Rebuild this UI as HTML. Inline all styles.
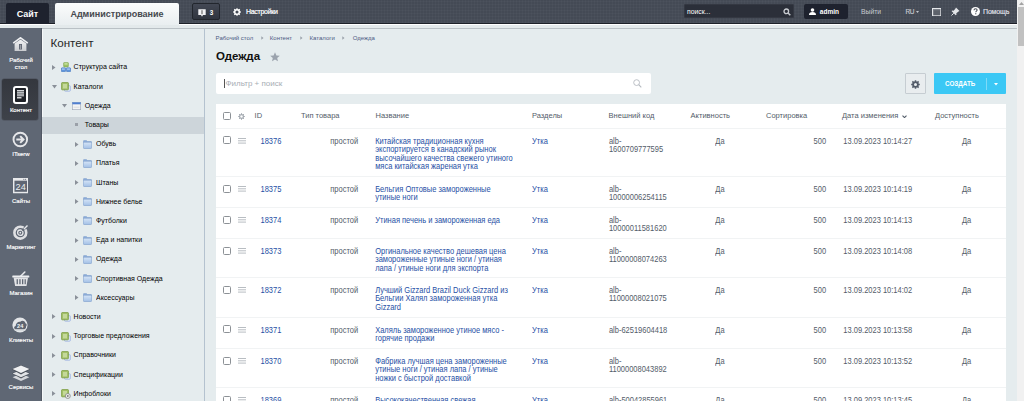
<!DOCTYPE html>
<html><head><meta charset="utf-8">
<style>
*{box-sizing:border-box;margin:0;padding:0}
html,body{width:1024px;height:401px;overflow:hidden;background:#e5ecee;font-family:"Liberation Sans",sans-serif;position:relative}
.a{position:absolute;white-space:nowrap}
#top{left:0;top:0;width:1017px;height:24px;background:repeating-linear-gradient(0deg,rgba(255,255,255,0.025) 0 1px,transparent 1px 3px),repeating-linear-gradient(90deg,rgba(255,255,255,0.025) 0 1px,transparent 1px 3px),#444a55;border-bottom:1px solid #1c2028}
#strip{left:0;top:24px;width:1017px;height:5px;background:#e3e9eb;border-top:1px solid #fff;border-bottom:1px solid #b9c0c5}
#side{left:0;top:28px;width:42px;height:373px;background:#5f6774;border-right:1px solid #515864}
#tree{left:42px;top:29px;width:163px;height:372px;background:#e5ecee;border-right:1px solid #b4c2cf;border-left:1px solid #f6f8f9}
#main{left:205px;top:29px;width:812px;height:372px;background:#e5ecee}
#sb{left:1017px;top:0;width:7px;height:401px;background:#f1f1f1}
#sbthumb{left:1018px;top:7px;width:6px;height:39px;background:#c1c1c1}
.tab1{left:6px;top:3px;width:43px;height:21px;background:#1e222e;border-radius:2px 2px 0 0;color:#fff;font-weight:bold;font-size:9px;text-align:center;line-height:22.5px}
.tab2{left:55px;top:3px;width:124px;height:22px;background:linear-gradient(#fbfcfc,#e9eef0);border-radius:2px 2px 0 0;color:#46494e;font-weight:bold;font-size:9px;text-align:center;line-height:22.5px}
.sl{-webkit-text-stroke:0.15px #fff;color:#fff;font-size:6px;text-align:center;width:42px;left:0;line-height:8px}
.ti{font-size:7px;color:#000;line-height:10px;transform:scaleY(1.1);transform-origin:0 50%}
.bc{font-size:6px;color:#4c5a83;line-height:8px;top:34px}
.th{font-size:7.5px;color:#535c69;line-height:9px;top:110.7px}
.td{font-size:7.5px;color:#535c69;line-height:7.39px;transform:scaleY(1.15);transform-origin:0 0}
.lk{color:#1f50a5}
.cb{width:8px;height:8px;border:1px solid #8c9196;border-radius:1.5px;left:223px;background:#fff}
.dr{left:238px;width:8px;height:5px;border-top:1px solid #b5b9be;border-bottom:1px solid #b5b9be}
.dr:after{content:"";position:absolute;left:0;right:0;top:1.5px;height:1px;background:#b5b9be}
.sep{left:216px;width:790px;height:1px;background:#f1f3f4}
</style></head>
<body>
<div id="top" class="a"></div>
<div id="strip" class="a"></div>

<div class="a tab1">Сайт</div>
<div class="a tab2">Администрирование</div>
<div class="a" style="left:191.5px;top:3.2px;width:28px;height:17.3px;background:linear-gradient(#434854,#30353f);border:1px solid #22262d;border-radius:2px"></div>
<svg class="a" style="left:197.5px;top:8.5px" width="8" height="8" viewBox="0 0 8 8"><path d="M0.3 0.3h7.4v5.8h-2.7l-1 1.6-1-1.6H0.3z" fill="#f2f3f5"/><rect x="3.5" y="1.2" width="1" height="4" fill="#555"/></svg>
<div class="a" style="left:209.8px;top:7.5px;font-size:6.3px;font-weight:bold;color:#fff;line-height:9px">3</div>
<svg class="a" style="left:232.5px;top:7.8px" width="8" height="8" viewBox="0 0 8 8"><circle cx="4" cy="4" r="2.3" fill="none" stroke="#fff" stroke-width="1.5"/><g stroke="#fff" stroke-width="1.3"><path d="M4 0.2v1.5M4 6.3v1.5M0.2 4h1.5M6.3 4h1.5M1.3 1.3l1 1M5.7 5.7l1 1M1.3 6.7l1-1M5.7 2.3l1-1"/></g></svg>
<div class="a" style="left:246px;top:7px;font-size:7px;letter-spacing:-0.3px;-webkit-text-stroke:0.2px #fff;color:#fff;line-height:9px">Настройки</div>
<div class="a" style="left:684px;top:4.2px;width:110px;height:14.3px;background:#2b2f39;border:1px solid #343842;border-radius:1px"></div>
<div class="a" style="left:687px;top:7px;font-size:6.8px;color:#fff;line-height:9px">поиск...</div>
<svg class="a" style="left:783px;top:7.5px" width="8" height="8" viewBox="0 0 8 8"><circle cx="3.3" cy="3.3" r="2.3" fill="none" stroke="#c9ccd1" stroke-width="1.3"/><path d="M5 5l2.3 2.3" stroke="#c9ccd1" stroke-width="1.5"/></svg>
<div class="a" style="left:804px;top:4px;width:44px;height:15px;background:#1e222e;border-radius:2px"></div>
<svg class="a" style="left:809px;top:8px" width="7" height="7" viewBox="0 0 7 7"><circle cx="3.5" cy="2" r="1.8" fill="#fff"/><path d="M0 7c0-2.2 1.3-3 3.5-3s3.5 0.8 3.5 3z" fill="#fff"/></svg>
<div class="a" style="left:819.8px;top:7px;font-size:6.5px;font-weight:bold;color:#fff;line-height:9px">admin</div>
<div class="a" style="left:861px;top:7px;font-size:6.8px;color:#c6cad0;line-height:9px">Выйти</div>
<div class="a" style="left:905.4px;top:7.3px;font-size:6.5px;letter-spacing:-0.3px;-webkit-text-stroke:0.15px #c6cad0;color:#c6cad0;line-height:9px">RU</div>
<svg class="a" style="left:916px;top:10.5px" width="3" height="2" viewBox="0 0 3 2"><path d="M0 0h3l-1.5 2z" fill="#c3c7cd"/></svg>
<svg class="a" style="left:931.7px;top:7.5px" width="9.5" height="8.5" viewBox="0 0 9.5 8.5"><rect x="0.6" y="0.6" width="8.3" height="7.3" fill="#5d626b" stroke="#e4e6e9" stroke-width="1.2"/><rect x="1.2" y="1.2" width="7.1" height="1" fill="#7d828a"/></svg>
<svg class="a" style="left:951px;top:7px" width="9" height="9" viewBox="0 0 9 9"><path d="M5 0.5l3.5 3.5-1 0.5-2.2 1.8 0.2 1.5-0.8 0.5-4-4 0.5-0.8 1.5 0.2 1.8-2.2z" fill="#e3e5e8"/><path d="M2.8 6.2l-2.3 2.3" stroke="#e3e5e8" stroke-width="1"/></svg>
<svg class="a" style="left:971px;top:7px" width="9" height="9" viewBox="0 0 9 9"><circle cx="4.5" cy="4.5" r="4.5" fill="#fff"/><path d="M3 3.3c0-1 0.7-1.6 1.6-1.6s1.5 0.6 1.5 1.4c0 1.1-1.3 1.1-1.3 2.2" fill="none" stroke="#4a4f59" stroke-width="1.1"/><rect x="4.2" y="6.2" width="1.1" height="1.1" fill="#4a4f59"/></svg>
<div class="a" style="left:983px;top:7px;font-size:7px;letter-spacing:-0.15px;-webkit-text-stroke:0.2px #dcdee2;color:#dcdee2;line-height:9px">Помощь</div>
<div id="side" class="a"></div>

<!-- sidebar -->
<svg class="a" style="left:12px;top:37px" width="17" height="15" viewBox="0 0 17 15"><defs><linearGradient id="hg" x1="0" y1="0" x2="0" y2="1"><stop offset="0" stop-color="#f4f5f6"/><stop offset="1" stop-color="#c9cbcf"/></linearGradient></defs><path d="M1.2 6.2L8.5 0.8l7.3 5.4" fill="none" stroke="#eeeff1" stroke-width="1.6"/><path d="M2.6 6.6L8.5 2.4l5.9 4.2V14H2.6z" fill="url(#hg)"/><rect x="7" y="7" width="3" height="5.5" fill="#5f6673"/><rect x="7.9" y="7.8" width="1.2" height="4.7" fill="#9a9ea5"/></svg>
<div class="a sl" style="top:56px">Рабочий</div>
<div class="a sl" style="top:63px">стол</div>
<div class="a" style="left:1.5px;top:78.5px;width:36.3px;height:41px;background:linear-gradient(#34373e,#3e424a);border-radius:2px;box-shadow:0 0 0 0.5px #4a4f58"></div>
<svg class="a" style="left:12.5px;top:85.5px" width="15" height="18" viewBox="0 0 15 18"><rect x="1" y="1" width="13" height="16" rx="2" fill="#1e2127" stroke="#fff" stroke-width="2"/><rect x="4" y="4" width="7" height="1.3" fill="#d6d8db"/><rect x="4" y="5.7" width="7" height="1.3" fill="#b9bcc0"/><rect x="4" y="7.4" width="7" height="1.3" fill="#d6d8db"/><rect x="4" y="9.1" width="7" height="1.3" fill="#b9bcc0"/><rect x="4" y="11.2" width="4.5" height="1.2" fill="#fff"/></svg>
<div class="a sl" style="top:106px">Контент</div>
<svg class="a" style="left:12px;top:130.5px" width="17" height="17" viewBox="0 0 17 17"><circle cx="8.3" cy="8.5" r="6.8" fill="none" stroke="#e6e7ea" stroke-width="1.9"/><path d="M4.3 8.5h7M8.2 5.1l3.3 3.4-3.3 3.4" fill="none" stroke="#e6e7ea" stroke-width="2"/></svg>
<div class="a sl" style="top:149.5px">ITserw</div>
<svg class="a" style="left:13px;top:177.5px" width="15" height="16" viewBox="0 0.5 15.5 16"><rect x="0" y="0" width="16" height="16" fill="#e9eaec"/><rect x="1.5" y="3" width="13" height="11.5" fill="#5f6673"/><circle cx="11.2" cy="1.5" r="0.6" fill="#5f6673"/><circle cx="13" cy="1.5" r="0.6" fill="#5f6673"/><text x="8" y="12.6" font-family="Liberation Sans" font-size="9.5" fill="#eceef0" text-anchor="middle">24</text></svg>
<div class="a sl" style="top:196.5px">Сайты</div>
<svg class="a" style="left:12.5px;top:224px" width="16" height="16" viewBox="0 0 16 16"><circle cx="7.3" cy="8.7" r="5.9" fill="none" stroke="#dfe0e3" stroke-width="2.6"/><circle cx="7.3" cy="8.7" r="2.7" fill="none" stroke="#e6e7ea" stroke-width="1.3"/><circle cx="7.3" cy="8.7" r="0.9" fill="#e6e7ea"/><path d="M9.3 6.7L14.2 1.8" stroke="#5f6774" stroke-width="2.6"/><path d="M10.8 5.2L14.5 1.5" stroke="#e6e7ea" stroke-width="1.4"/></svg>
<div class="a sl" style="top:243px">Маркетинг</div>
<svg class="a" style="left:11.5px;top:270.5px" width="18" height="16" viewBox="0 0 18 16"><path d="M8.8 5L12.8 1" stroke="#e6e7ea" stroke-width="1.6" stroke-linecap="round"/><rect x="0.3" y="4.4" width="17" height="2.2" rx="0.6" fill="#eeeff1"/><path d="M1.6 6.6h14.4l-1.5 8.4H3.1z" fill="#e2e3e6"/><g fill="#5f6774"><rect x="4.6" y="8.2" width="1.3" height="5"/><rect x="7.3" y="8.2" width="1.3" height="5"/><rect x="10" y="8.2" width="1.3" height="5"/><rect x="12.6" y="8.2" width="1.2" height="5"/></g></svg>
<div class="a sl" style="top:289px">Магазин</div>
<svg class="a" style="left:12px;top:317px" width="16" height="16" viewBox="0 0 16 16"><circle cx="8" cy="8" r="7.6" fill="#e3e5e8"/><path d="M3.6 12.2c-1.6 0-2.2-2.9 0.1-3.3 0-2.8 2.3-4.6 4.6-4.2 1.5-1.8 5-1.2 5.1 1.6 1.7 0.4 1.6 2.7 0.6 3.3 0.3 1.5-0.6 2.6-2 2.6z" fill="#5d6470"/><text x="8.2" y="10.6" font-family="Liberation Sans" font-size="5.6" font-weight="bold" fill="#f4f5f6" text-anchor="middle">24</text><path d="M2.5 13.2h11" stroke="#c9ccd1" stroke-width="0.6"/></svg>
<div class="a sl" style="top:336px">Клиенты</div>
<svg class="a" style="left:12.3px;top:365.3px" width="18" height="17" viewBox="0 0 18 17"><path d="M9 8.6L0.6 12.2 9 16l8.4-3.8z" fill="#d5d7db"/><path d="M9 4L-0.2 8.4 9 13.6l9.2-5.2z" fill="#4c525b"/><path d="M9 5L0.6 8.4 9 12.2l8.4-3.8z" fill="#e2e4e7"/><path d="M9 0L-0.2 4.3 9 9.4l9.2-5.1z" fill="#4c525b"/><path d="M9 0.4L0.6 4.1 9 8l8.4-3.9z" fill="#f0f1f3"/></svg>
<div class="a sl" style="top:383px">Сервисы</div>
<div id="tree" class="a"></div>
<div class="a" style="left:42px;top:117px;width:162px;height:16.5px;background:#cdd5da"></div>
<svg class="a" style="left:52px;top:64.8px" width="4" height="5" viewBox="0 0 4 5"><path d="M0 0l3.5 2.5L0 5z" fill="#8a9099"/></svg>
<svg class="a" style="left:60.5px;top:62.3px" width="10" height="10" viewBox="0 0 10 10"><rect x="2.6" y="0.4" width="4.8" height="4.6" rx="0.8" fill="#9cc266" stroke="#79a046" stroke-width="0.5"/><rect x="3.4" y="1.1" width="3.2" height="1.6" fill="#c6e09c"/><rect x="0.3" y="5.8" width="4.3" height="3.9" rx="0.8" fill="#5e95dc" stroke="#3f70b8" stroke-width="0.5"/><rect x="5.4" y="5.8" width="4.3" height="3.9" rx="0.8" fill="#5e95dc" stroke="#3f70b8" stroke-width="0.5"/><rect x="1" y="6.4" width="2.8" height="1.4" fill="#a9c9f2"/><rect x="6.1" y="6.4" width="2.8" height="1.4" fill="#a9c9f2"/></svg>
<div class="a ti" style="left:73.6px;top:62.3px">Структура сайта</div>
<svg class="a" style="left:51.5px;top:84.5px" width="5" height="4" viewBox="0 0 5 4"><path d="M0 0h5L2.5 3.5z" fill="#8a9099"/></svg>
<svg class="a" style="left:60.5px;top:82.0px" width="10" height="10" viewBox="0 0 10 10"><rect x="3.5" y="3.7" width="5.8" height="5.5" rx="0.8" fill="#e3ebfa" stroke="#8fa6dc" stroke-width="0.7"/><rect x="0.6" y="0.6" width="6.8" height="7.2" rx="0.6" fill="#a6c26a" stroke="#789a3f" stroke-width="0.8"/><rect x="2" y="2" width="4" height="4.4" fill="#c4d89a"/></svg>
<div class="a ti" style="left:73.6px;top:81.5px">Каталоги</div>
<svg class="a" style="left:62.3px;top:103.7px" width="5" height="4" viewBox="0 0 5 4"><path d="M0 0h5L2.5 3.5z" fill="#8a9099"/></svg>
<svg class="a" style="left:72px;top:101.7px" width="9" height="8" viewBox="0 0 9 8"><rect x="0.3" y="0.3" width="8.4" height="7.4" fill="#f4f4f4" stroke="#9aa4b4" stroke-width="0.6"/><rect x="0.3" y="0.3" width="8.4" height="2" fill="#4f7fd0"/><path d="M1.5 5.2h6" stroke="#c8ccd2" stroke-width="0.6"/></svg>
<div class="a ti" style="left:84.8px;top:100.7px">Одежда</div>
<div class="a" style="left:74.5px;top:123.4px;width:3px;height:3px;background:#9aa0a8"></div>
<div class="a ti" style="left:84.8px;top:119.9px">Товары</div>
<svg class="a" style="left:74.5px;top:141.6px" width="4" height="5" viewBox="0 0 4 5"><path d="M0 0l3.5 2.5L0 5z" fill="#8a9099"/></svg>
<svg class="a" style="left:83px;top:139.6px" width="9" height="9" viewBox="0 0 9 9"><defs><linearGradient id="fg" x1="0" y1="0" x2="0" y2="1"><stop offset="0" stop-color="#d6e5f7"/><stop offset="1" stop-color="#a3c0e6"/></linearGradient></defs><path d="M0.9 0.6h2.6l0.9 0.9h3.7q0.5 0 0.5 0.5v0.6H0.4V1.1q0-0.5 0.5-0.5z" fill="#8fb0dd" stroke="#7c9dcb" stroke-width="0.5"/><rect x="0.35" y="2.2" width="8.3" height="6.3" rx="0.8" fill="url(#fg)" stroke="#7c9dcb" stroke-width="0.6"/></svg>
<div class="a ti" style="left:96px;top:139.1px">Обувь</div>
<svg class="a" style="left:74.5px;top:160.8px" width="4" height="5" viewBox="0 0 4 5"><path d="M0 0l3.5 2.5L0 5z" fill="#8a9099"/></svg>
<svg class="a" style="left:83px;top:158.8px" width="9" height="9" viewBox="0 0 9 9"><defs><linearGradient id="fg" x1="0" y1="0" x2="0" y2="1"><stop offset="0" stop-color="#d6e5f7"/><stop offset="1" stop-color="#a3c0e6"/></linearGradient></defs><path d="M0.9 0.6h2.6l0.9 0.9h3.7q0.5 0 0.5 0.5v0.6H0.4V1.1q0-0.5 0.5-0.5z" fill="#8fb0dd" stroke="#7c9dcb" stroke-width="0.5"/><rect x="0.35" y="2.2" width="8.3" height="6.3" rx="0.8" fill="url(#fg)" stroke="#7c9dcb" stroke-width="0.6"/></svg>
<div class="a ti" style="left:96px;top:158.3px">Платья</div>
<svg class="a" style="left:74.5px;top:180.0px" width="4" height="5" viewBox="0 0 4 5"><path d="M0 0l3.5 2.5L0 5z" fill="#8a9099"/></svg>
<svg class="a" style="left:83px;top:178.0px" width="9" height="9" viewBox="0 0 9 9"><defs><linearGradient id="fg" x1="0" y1="0" x2="0" y2="1"><stop offset="0" stop-color="#d6e5f7"/><stop offset="1" stop-color="#a3c0e6"/></linearGradient></defs><path d="M0.9 0.6h2.6l0.9 0.9h3.7q0.5 0 0.5 0.5v0.6H0.4V1.1q0-0.5 0.5-0.5z" fill="#8fb0dd" stroke="#7c9dcb" stroke-width="0.5"/><rect x="0.35" y="2.2" width="8.3" height="6.3" rx="0.8" fill="url(#fg)" stroke="#7c9dcb" stroke-width="0.6"/></svg>
<div class="a ti" style="left:96px;top:177.5px">Штаны</div>
<svg class="a" style="left:74.5px;top:199.2px" width="4" height="5" viewBox="0 0 4 5"><path d="M0 0l3.5 2.5L0 5z" fill="#8a9099"/></svg>
<svg class="a" style="left:83px;top:197.2px" width="9" height="9" viewBox="0 0 9 9"><defs><linearGradient id="fg" x1="0" y1="0" x2="0" y2="1"><stop offset="0" stop-color="#d6e5f7"/><stop offset="1" stop-color="#a3c0e6"/></linearGradient></defs><path d="M0.9 0.6h2.6l0.9 0.9h3.7q0.5 0 0.5 0.5v0.6H0.4V1.1q0-0.5 0.5-0.5z" fill="#8fb0dd" stroke="#7c9dcb" stroke-width="0.5"/><rect x="0.35" y="2.2" width="8.3" height="6.3" rx="0.8" fill="url(#fg)" stroke="#7c9dcb" stroke-width="0.6"/></svg>
<div class="a ti" style="left:96px;top:196.7px">Нижнее белье</div>
<svg class="a" style="left:74.5px;top:218.4px" width="4" height="5" viewBox="0 0 4 5"><path d="M0 0l3.5 2.5L0 5z" fill="#8a9099"/></svg>
<svg class="a" style="left:83px;top:216.4px" width="9" height="9" viewBox="0 0 9 9"><defs><linearGradient id="fg" x1="0" y1="0" x2="0" y2="1"><stop offset="0" stop-color="#d6e5f7"/><stop offset="1" stop-color="#a3c0e6"/></linearGradient></defs><path d="M0.9 0.6h2.6l0.9 0.9h3.7q0.5 0 0.5 0.5v0.6H0.4V1.1q0-0.5 0.5-0.5z" fill="#8fb0dd" stroke="#7c9dcb" stroke-width="0.5"/><rect x="0.35" y="2.2" width="8.3" height="6.3" rx="0.8" fill="url(#fg)" stroke="#7c9dcb" stroke-width="0.6"/></svg>
<div class="a ti" style="left:96px;top:215.9px">Футболки</div>
<svg class="a" style="left:74.5px;top:237.6px" width="4" height="5" viewBox="0 0 4 5"><path d="M0 0l3.5 2.5L0 5z" fill="#8a9099"/></svg>
<svg class="a" style="left:83px;top:235.6px" width="9" height="9" viewBox="0 0 9 9"><defs><linearGradient id="fg" x1="0" y1="0" x2="0" y2="1"><stop offset="0" stop-color="#d6e5f7"/><stop offset="1" stop-color="#a3c0e6"/></linearGradient></defs><path d="M0.9 0.6h2.6l0.9 0.9h3.7q0.5 0 0.5 0.5v0.6H0.4V1.1q0-0.5 0.5-0.5z" fill="#8fb0dd" stroke="#7c9dcb" stroke-width="0.5"/><rect x="0.35" y="2.2" width="8.3" height="6.3" rx="0.8" fill="url(#fg)" stroke="#7c9dcb" stroke-width="0.6"/></svg>
<div class="a ti" style="left:96px;top:235.1px">Еда и напитки</div>
<svg class="a" style="left:74.5px;top:256.8px" width="4" height="5" viewBox="0 0 4 5"><path d="M0 0l3.5 2.5L0 5z" fill="#8a9099"/></svg>
<svg class="a" style="left:83px;top:254.8px" width="9" height="9" viewBox="0 0 9 9"><defs><linearGradient id="fg" x1="0" y1="0" x2="0" y2="1"><stop offset="0" stop-color="#d6e5f7"/><stop offset="1" stop-color="#a3c0e6"/></linearGradient></defs><path d="M0.9 0.6h2.6l0.9 0.9h3.7q0.5 0 0.5 0.5v0.6H0.4V1.1q0-0.5 0.5-0.5z" fill="#8fb0dd" stroke="#7c9dcb" stroke-width="0.5"/><rect x="0.35" y="2.2" width="8.3" height="6.3" rx="0.8" fill="url(#fg)" stroke="#7c9dcb" stroke-width="0.6"/></svg>
<div class="a ti" style="left:96px;top:254.3px">Одежда</div>
<svg class="a" style="left:74.5px;top:276.0px" width="4" height="5" viewBox="0 0 4 5"><path d="M0 0l3.5 2.5L0 5z" fill="#8a9099"/></svg>
<svg class="a" style="left:83px;top:274.0px" width="9" height="9" viewBox="0 0 9 9"><defs><linearGradient id="fg" x1="0" y1="0" x2="0" y2="1"><stop offset="0" stop-color="#d6e5f7"/><stop offset="1" stop-color="#a3c0e6"/></linearGradient></defs><path d="M0.9 0.6h2.6l0.9 0.9h3.7q0.5 0 0.5 0.5v0.6H0.4V1.1q0-0.5 0.5-0.5z" fill="#8fb0dd" stroke="#7c9dcb" stroke-width="0.5"/><rect x="0.35" y="2.2" width="8.3" height="6.3" rx="0.8" fill="url(#fg)" stroke="#7c9dcb" stroke-width="0.6"/></svg>
<div class="a ti" style="left:96px;top:273.5px">Спортивная Одежда</div>
<svg class="a" style="left:74.5px;top:295.2px" width="4" height="5" viewBox="0 0 4 5"><path d="M0 0l3.5 2.5L0 5z" fill="#8a9099"/></svg>
<svg class="a" style="left:83px;top:293.2px" width="9" height="9" viewBox="0 0 9 9"><defs><linearGradient id="fg" x1="0" y1="0" x2="0" y2="1"><stop offset="0" stop-color="#d6e5f7"/><stop offset="1" stop-color="#a3c0e6"/></linearGradient></defs><path d="M0.9 0.6h2.6l0.9 0.9h3.7q0.5 0 0.5 0.5v0.6H0.4V1.1q0-0.5 0.5-0.5z" fill="#8fb0dd" stroke="#7c9dcb" stroke-width="0.5"/><rect x="0.35" y="2.2" width="8.3" height="6.3" rx="0.8" fill="url(#fg)" stroke="#7c9dcb" stroke-width="0.6"/></svg>
<div class="a ti" style="left:96px;top:292.7px">Аксессуары</div>
<svg class="a" style="left:52px;top:314.4px" width="4" height="5" viewBox="0 0 4 5"><path d="M0 0l3.5 2.5L0 5z" fill="#8a9099"/></svg>
<svg class="a" style="left:60.5px;top:312.4px" width="10" height="10" viewBox="0 0 10 10"><rect x="3.5" y="3.7" width="5.8" height="5.5" rx="0.8" fill="#e3ebfa" stroke="#8fa6dc" stroke-width="0.7"/><rect x="0.6" y="0.6" width="6.8" height="7.2" rx="0.6" fill="#a6c26a" stroke="#789a3f" stroke-width="0.8"/><rect x="2" y="2" width="4" height="4.4" fill="#c4d89a"/></svg>
<div class="a ti" style="left:73.6px;top:311.9px">Новости</div>
<svg class="a" style="left:52px;top:333.6px" width="4" height="5" viewBox="0 0 4 5"><path d="M0 0l3.5 2.5L0 5z" fill="#8a9099"/></svg>
<svg class="a" style="left:60.5px;top:331.6px" width="10" height="10" viewBox="0 0 10 10"><rect x="3.5" y="3.7" width="5.8" height="5.5" rx="0.8" fill="#e3ebfa" stroke="#8fa6dc" stroke-width="0.7"/><rect x="0.6" y="0.6" width="6.8" height="7.2" rx="0.6" fill="#a6c26a" stroke="#789a3f" stroke-width="0.8"/><rect x="2" y="2" width="4" height="4.4" fill="#c4d89a"/></svg>
<div class="a ti" style="left:73.6px;top:331.1px">Торговые предложения</div>
<svg class="a" style="left:52px;top:352.8px" width="4" height="5" viewBox="0 0 4 5"><path d="M0 0l3.5 2.5L0 5z" fill="#8a9099"/></svg>
<svg class="a" style="left:60.5px;top:350.8px" width="10" height="10" viewBox="0 0 10 10"><rect x="3.5" y="3.7" width="5.8" height="5.5" rx="0.8" fill="#e3ebfa" stroke="#8fa6dc" stroke-width="0.7"/><rect x="0.6" y="0.6" width="6.8" height="7.2" rx="0.6" fill="#a6c26a" stroke="#789a3f" stroke-width="0.8"/><rect x="2" y="2" width="4" height="4.4" fill="#c4d89a"/></svg>
<div class="a ti" style="left:73.6px;top:350.3px">Справочники</div>
<svg class="a" style="left:52px;top:372.0px" width="4" height="5" viewBox="0 0 4 5"><path d="M0 0l3.5 2.5L0 5z" fill="#8a9099"/></svg>
<svg class="a" style="left:60.5px;top:370.0px" width="10" height="10" viewBox="0 0 10 10"><rect x="3.5" y="3.7" width="5.8" height="5.5" rx="0.8" fill="#e3ebfa" stroke="#8fa6dc" stroke-width="0.7"/><rect x="0.6" y="0.6" width="6.8" height="7.2" rx="0.6" fill="#a6c26a" stroke="#789a3f" stroke-width="0.8"/><rect x="2" y="2" width="4" height="4.4" fill="#c4d89a"/></svg>
<div class="a ti" style="left:73.6px;top:369.5px">Спецификации</div>
<svg class="a" style="left:52px;top:391.2px" width="4" height="5" viewBox="0 0 4 5"><path d="M0 0l3.5 2.5L0 5z" fill="#8a9099"/></svg>
<svg class="a" style="left:60.5px;top:389.2px" width="10" height="10" viewBox="0 0 10 10"><rect x="0.6" y="0.6" width="6.8" height="7.2" rx="0.6" fill="#a6c26a" stroke="#789a3f" stroke-width="0.8"/><rect x="2" y="2" width="4" height="4.4" fill="#c4d89a"/><circle cx="6.8" cy="7" r="2.5" fill="#ececec" stroke="#7a7a7a" stroke-width="0.7"/><circle cx="6.8" cy="7" r="0.9" fill="#7a7a7a"/></svg>
<div class="a ti" style="left:73.6px;top:388.7px">Инфоблоки</div>
<div class="a" style="left:50.5px;top:36px;font-size:11.6px;color:#262626;line-height:14px">Контент</div>
<div id="main" class="a"></div>
<div id="sb" class="a"></div>
<div id="sbthumb" class="a"></div>
<svg class="a" style="left:1018.5px;top:2px" width="5" height="3" viewBox="0 0 5 3"><path d="M0 3L2.5 0 5 3z" fill="#a3a3a3"/></svg>

<!-- main -->
<div class="a bc" style="left:215.6px">Рабочий стол</div>
<svg class="a" style="left:260.5px;top:36.2px" width="3" height="4" viewBox="0 0 3 4"><path d="M0.3 0.3l2.2 1.7-2.2 1.7z" fill="#9aa1aa"/></svg>
<div class="a bc" style="left:269.8px">Контент</div>
<svg class="a" style="left:300px;top:36.2px" width="3" height="4" viewBox="0 0 3 4"><path d="M0.3 0.3l2.2 1.7-2.2 1.7z" fill="#9aa1aa"/></svg>
<div class="a bc" style="left:309.6px">Каталоги</div>
<svg class="a" style="left:342px;top:36.2px" width="3" height="4" viewBox="0 0 3 4"><path d="M0.3 0.3l2.2 1.7-2.2 1.7z" fill="#9aa1aa"/></svg>
<div class="a bc" style="left:352.7px">Одежда</div>
<div class="a" style="left:216px;top:49px;font-size:11.5px;font-weight:bold;color:#111;line-height:14px">Одежда</div>
<svg class="a" style="left:269.5px;top:52px" width="10" height="10" viewBox="0 0 10 10"><path d="M5 0.3l1.4 3.1 3.4 0.3-2.6 2.2 0.8 3.4L5 7.5 2 9.3l0.8-3.4L0.2 3.7l3.4-0.3z" fill="#9ba3ad"/></svg>
<div class="a" style="left:216px;top:73.2px;width:434.5px;height:20.8px;background:#fff;border-radius:2px"></div>
<div class="a" style="left:224px;top:79px;width:1px;height:9px;background:#555"></div>
<div class="a" style="left:225.5px;top:79px;font-size:8px;color:#a7adb4;line-height:10px">Фильтр + поиск</div>
<svg class="a" style="left:632.5px;top:79px" width="9" height="9" viewBox="0 0 9 9"><circle cx="3.6" cy="3.6" r="2.9" fill="none" stroke="#b4b9bf" stroke-width="0.9"/><path d="M5.7 5.7l2.6 2.6" stroke="#b4b9bf" stroke-width="1.1"/></svg>
<div class="a" style="left:904.8px;top:73px;width:20.8px;height:20.8px;background:#e9edef;border:1px solid #c6cdd2;border-radius:1px"></div>
<svg class="a" style="left:910.5px;top:79.5px" width="9" height="9" viewBox="0 0 9 9"><circle cx="4.5" cy="4.5" r="2.4" fill="none" stroke="#535c69" stroke-width="1.8"/><g stroke="#535c69" stroke-width="1.5"><path d="M4.5 0.2v1.8M4.5 7v1.8M0.2 4.5h1.8M7 4.5h1.8M1.4 1.4l1.3 1.3M6.3 6.3l1.3 1.3M1.4 7.6l1.3-1.3M6.3 2.7l1.3-1.3"/></g></svg>
<div class="a" style="left:934px;top:73px;width:72px;height:20.8px;background:#3bc8f5;border-radius:1px"></div>
<div class="a" style="left:945px;top:79px;font-size:6.3px;font-weight:bold;color:#fff;line-height:9px">СОЗДАТЬ</div>
<div class="a" style="left:985.5px;top:78px;width:1px;height:12px;background:#7fdaf8"></div>
<svg class="a" style="left:993.5px;top:83px" width="4" height="2.5" viewBox="0 0 4 2.5"><path d="M0 0h4L2 2.5z" fill="#fff"/></svg>
<div class="a" style="left:216px;top:104px;width:790px;height:297px;background:#fff"></div>

<div class="a cb" style="top:112px"></div>
<svg class="a" style="left:238px;top:112.5px" width="7" height="7" viewBox="0 0 7 7"><circle cx="3.5" cy="3.5" r="1.9" fill="none" stroke="#a3a9b0" stroke-width="1.2"/><g stroke="#a3a9b0" stroke-width="1"><path d="M3.5 0.2v1.3M3.5 5.5v1.3M0.2 3.5h1.3M5.5 3.5h1.3M1.1 1.1l0.9 0.9M5 5l0.9 0.9M1.1 5.9l0.9-0.9M5 2l0.9-0.9"/></g></svg>
<div class="a th" style="left:254.6px">ID</div>
<div class="a th" style="left:301px">Тип товара</div>
<div class="a th" style="left:375.6px">Название</div>
<div class="a th" style="left:532px">Разделы</div>
<div class="a th" style="left:608.6px">Внешний код</div>
<div class="a th" style="left:690.6px">Активность</div>
<div class="a th" style="left:766px">Сортировка</div>
<div class="a th" style="left:842px">Дата изменения</div>
<div class="a th" style="left:935px">Доступность</div>
<svg class="a" style="left:902.3px;top:114.6px" width="5" height="3.5" viewBox="0 0 5 3.5"><path d="M0.5 0.6L2.5 2.6 4.5 0.6" fill="none" stroke="#535c69" stroke-width="1.1"/></svg>
<div class="a sep" style="top:128px"></div>
<div class="a cb" style="top:136.3px"></div>
<svg class="a" style="left:238px;top:137.7px" width="8" height="6" viewBox="0 0 8 6"><path d="M0 0.5h8M0 2.8h8M0 5.1h8" stroke="#b0b5bb" stroke-width="0.9"/></svg>
<div class="a td lk" style="left:260.5px;top:136.75px">18376</div>
<div class="a td" style="left:300px;width:58.2px;text-align:right;top:136.75px">простой</div>
<div class="a td lk" style="left:375.2px;top:136.75px">Китайская традиционная кухня<br>экспортируется в канадский рынок<br>высочайшего качества свежего утиного<br>мяса китайская жареная утка</div>
<div class="a td lk" style="left:532px;top:136.75px">Утка</div>
<div class="a td" style="left:608.9px;top:136.75px">alb-<br>1600709777595</div>
<div class="a td" style="left:700px;width:40px;text-align:center;top:136.75px">Да</div>
<div class="a td" style="left:786px;width:40.1px;text-align:right;top:136.75px">500</div>
<div class="a td" style="left:843.3px;top:136.75px">13.09.2023 10:14:27</div>
<div class="a td" style="left:946.6px;width:40px;text-align:center;top:136.75px">Да</div>
<div class="a cb" style="top:184.7px"></div>
<svg class="a" style="left:238px;top:186.1px" width="8" height="6" viewBox="0 0 8 6"><path d="M0 0.5h8M0 2.8h8M0 5.1h8" stroke="#b0b5bb" stroke-width="0.9"/></svg>
<div class="a td lk" style="left:260.5px;top:185.15px">18375</div>
<div class="a td" style="left:300px;width:58.2px;text-align:right;top:185.15px">простой</div>
<div class="a td lk" style="left:375.2px;top:185.15px">Бельгия Оптовые замороженные<br>утиные ноги</div>
<div class="a td lk" style="left:532px;top:185.15px">Утка</div>
<div class="a td" style="left:608.9px;top:185.15px">alb-<br>10000006254115</div>
<div class="a td" style="left:700px;width:40px;text-align:center;top:185.15px">Да</div>
<div class="a td" style="left:786px;width:40.1px;text-align:right;top:185.15px">500</div>
<div class="a td" style="left:843.3px;top:185.15px">13.09.2023 10:14:19</div>
<div class="a td" style="left:946.6px;width:40px;text-align:center;top:185.15px">Да</div>
<div class="a sep" style="top:176px"></div>
<div class="a cb" style="top:215.7px"></div>
<svg class="a" style="left:238px;top:217.1px" width="8" height="6" viewBox="0 0 8 6"><path d="M0 0.5h8M0 2.8h8M0 5.1h8" stroke="#b0b5bb" stroke-width="0.9"/></svg>
<div class="a td lk" style="left:260.5px;top:216.15px">18374</div>
<div class="a td" style="left:300px;width:58.2px;text-align:right;top:216.15px">простой</div>
<div class="a td lk" style="left:375.2px;top:216.15px">Утиная печень и замороженная еда</div>
<div class="a td lk" style="left:532px;top:216.15px">Утка</div>
<div class="a td" style="left:608.9px;top:216.15px">alb-<br>10000011581620</div>
<div class="a td" style="left:700px;width:40px;text-align:center;top:216.15px">Да</div>
<div class="a td" style="left:786px;width:40.1px;text-align:right;top:216.15px">500</div>
<div class="a td" style="left:843.3px;top:216.15px">13.09.2023 10:14:13</div>
<div class="a td" style="left:946.6px;width:40px;text-align:center;top:216.15px">Да</div>
<div class="a sep" style="top:207px"></div>
<div class="a cb" style="top:246.6px"></div>
<svg class="a" style="left:238px;top:248.0px" width="8" height="6" viewBox="0 0 8 6"><path d="M0 0.5h8M0 2.8h8M0 5.1h8" stroke="#b0b5bb" stroke-width="0.9"/></svg>
<div class="a td lk" style="left:260.5px;top:247.05px">18373</div>
<div class="a td" style="left:300px;width:58.2px;text-align:right;top:247.05px">простой</div>
<div class="a td lk" style="left:375.2px;top:247.05px">Оргинальное качество дешевая цена<br>замороженные утиные ноги / утиная<br>лапа / утиные ноги для экспорта</div>
<div class="a td lk" style="left:532px;top:247.05px">Утка</div>
<div class="a td" style="left:608.9px;top:247.05px">alb-<br>11000008074263</div>
<div class="a td" style="left:700px;width:40px;text-align:center;top:247.05px">Да</div>
<div class="a td" style="left:786px;width:40.1px;text-align:right;top:247.05px">500</div>
<div class="a td" style="left:843.3px;top:247.05px">13.09.2023 10:14:08</div>
<div class="a td" style="left:946.6px;width:40px;text-align:center;top:247.05px">Да</div>
<div class="a sep" style="top:238px"></div>
<div class="a cb" style="top:285.6px"></div>
<svg class="a" style="left:238px;top:287.0px" width="8" height="6" viewBox="0 0 8 6"><path d="M0 0.5h8M0 2.8h8M0 5.1h8" stroke="#b0b5bb" stroke-width="0.9"/></svg>
<div class="a td lk" style="left:260.5px;top:286.05px">18372</div>
<div class="a td" style="left:300px;width:58.2px;text-align:right;top:286.05px">простой</div>
<div class="a td lk" style="left:375.2px;top:286.05px">Лучший Gizzard Brazil Duck Gizzard из<br>Бельгии Халял замороженная утка<br>Gizzard</div>
<div class="a td lk" style="left:532px;top:286.05px">Утка</div>
<div class="a td" style="left:608.9px;top:286.05px">alb-<br>11000008021075</div>
<div class="a td" style="left:700px;width:40px;text-align:center;top:286.05px">Да</div>
<div class="a td" style="left:786px;width:40.1px;text-align:right;top:286.05px">500</div>
<div class="a td" style="left:843.3px;top:286.05px">13.09.2023 10:14:02</div>
<div class="a td" style="left:946.6px;width:40px;text-align:center;top:286.05px">Да</div>
<div class="a sep" style="top:277px"></div>
<div class="a cb" style="top:325.1px"></div>
<svg class="a" style="left:238px;top:326.5px" width="8" height="6" viewBox="0 0 8 6"><path d="M0 0.5h8M0 2.8h8M0 5.1h8" stroke="#b0b5bb" stroke-width="0.9"/></svg>
<div class="a td lk" style="left:260.5px;top:325.55px">18371</div>
<div class="a td" style="left:300px;width:58.2px;text-align:right;top:325.55px">простой</div>
<div class="a td lk" style="left:375.2px;top:325.55px">Халяль замороженное утиное мясо -<br>горячие продажи</div>
<div class="a td lk" style="left:532px;top:325.55px">Утка</div>
<div class="a td" style="left:608.9px;top:325.55px">alb-62519604418</div>
<div class="a td" style="left:700px;width:40px;text-align:center;top:325.55px">Да</div>
<div class="a td" style="left:786px;width:40.1px;text-align:right;top:325.55px">500</div>
<div class="a td" style="left:843.3px;top:325.55px">13.09.2023 10:13:58</div>
<div class="a td" style="left:946.6px;width:40px;text-align:center;top:325.55px">Да</div>
<div class="a sep" style="top:317px"></div>
<div class="a cb" style="top:356.8px"></div>
<svg class="a" style="left:238px;top:358.2px" width="8" height="6" viewBox="0 0 8 6"><path d="M0 0.5h8M0 2.8h8M0 5.1h8" stroke="#b0b5bb" stroke-width="0.9"/></svg>
<div class="a td lk" style="left:260.5px;top:357.25px">18370</div>
<div class="a td" style="left:300px;width:58.2px;text-align:right;top:357.25px">простой</div>
<div class="a td lk" style="left:375.2px;top:357.25px">Фабрика лучшая цена замороженные<br>утиные ноги / утиная лапа / утиные<br>ножки с быстрой доставкой</div>
<div class="a td lk" style="left:532px;top:357.25px">Утка</div>
<div class="a td" style="left:608.9px;top:357.25px">alb-<br>11000008043892</div>
<div class="a td" style="left:700px;width:40px;text-align:center;top:357.25px">Да</div>
<div class="a td" style="left:786px;width:40.1px;text-align:right;top:357.25px">500</div>
<div class="a td" style="left:843.3px;top:357.25px">13.09.2023 10:13:52</div>
<div class="a td" style="left:946.6px;width:40px;text-align:center;top:357.25px">Да</div>
<div class="a sep" style="top:348px"></div>
<div class="a cb" style="top:395.8px"></div>
<svg class="a" style="left:238px;top:397.2px" width="8" height="6" viewBox="0 0 8 6"><path d="M0 0.5h8M0 2.8h8M0 5.1h8" stroke="#b0b5bb" stroke-width="0.9"/></svg>
<div class="a td lk" style="left:260.5px;top:396.25px">18369</div>
<div class="a td" style="left:300px;width:58.2px;text-align:right;top:396.25px">простой</div>
<div class="a td lk" style="left:375.2px;top:396.25px">Высококачественная свежая</div>
<div class="a td lk" style="left:532px;top:396.25px">Утка</div>
<div class="a td" style="left:608.9px;top:396.25px">alb-50042855961</div>
<div class="a td" style="left:700px;width:40px;text-align:center;top:396.25px">Да</div>
<div class="a td" style="left:786px;width:40.1px;text-align:right;top:396.25px">500</div>
<div class="a td" style="left:843.3px;top:396.25px">13.09.2023 10:13:45</div>
<div class="a td" style="left:946.6px;width:40px;text-align:center;top:396.25px">Да</div>
<div class="a sep" style="top:387px"></div>
</body></html>
